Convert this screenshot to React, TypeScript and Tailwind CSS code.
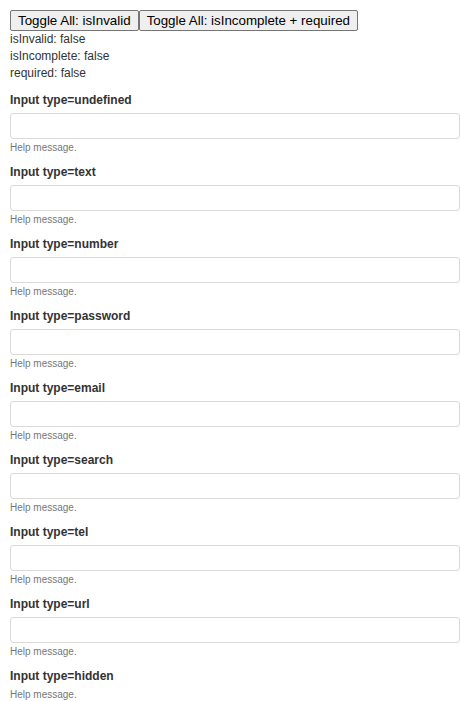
const types = ["undefined", "text", "number", "password", "email", "search", "tel", "url"];

function Field({ type }: { type: string }) {
  return (
    <div className="mb-[9px]">
      <label className="block h-[17px] text-[12px] font-bold leading-[17px] text-[#333]">
        Input type={type}
      </label>
      <input
        type={type === "undefined" ? undefined : type}
        className="mt-[4px] block h-[26px] w-full rounded-[3px] border border-[#d9d9d9] bg-white px-2 text-[12px] outline-none"
      />
      <div className="mt-[2px] h-[14px] text-[10px] leading-[14px] text-[#777]">Help message.</div>
    </div>
  );
}

export default function App() {
  return (
    <div className="min-h-screen bg-white pl-[10px] pt-[10px] font-['Liberation_Sans',Arial,sans-serif] text-[#333]">
      <div className="flex">
        <button className="h-[21px] rounded-[2px] border border-[#767676] bg-[#efefef] px-[7px] text-[13.33px] leading-[19px] text-black">
          Toggle All: isInvalid
        </button>
        <button className="h-[21px] rounded-[2px] border border-[#767676] bg-[#efefef] px-[7px] text-[13.33px] leading-[19px] text-black">
          Toggle All: isIncomplete + required
        </button>
      </div>
      <div className="text-[12px] leading-[17px]">
        <div>isInvalid: false</div>
        <div>isIncomplete: false</div>
        <div>required: false</div>
      </div>
      <div className="mt-[10px]">
        {types.map((t) => (
          <Field key={t} type={t} />
        ))}
        <div>
          <label className="block h-[17px] text-[12px] font-bold leading-[17px] text-[#333]">
            Input type=hidden
          </label>
          <input type="hidden" />
          <div className="mt-[3px] h-[14px] text-[10px] leading-[14px] text-[#777]">Help message.</div>
        </div>
      </div>
    </div>
  );
}
